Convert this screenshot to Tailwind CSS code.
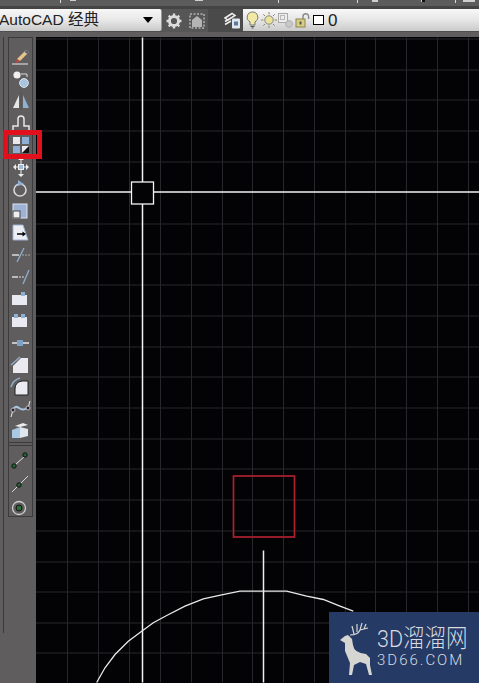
<!DOCTYPE html>
<html lang="en">
<head>
    <meta charset="UTF-8">
    <title>AutoCAD</title>
    <script src="https://cdn.jsdelivr.net/npm/@tailwindcss/browser@4"></script>
</head>
<body class="bg-[#5f5d5e] font-['Liberation_Sans','Noto_Sans_CJK_SC',sans-serif]">
<div class="relative w-[479px] h-[683px] overflow-hidden flex flex-col">

    <!-- title strip -->
    <svg class="block h-[9px] w-full shrink-0 bg-[#5c5c5c]" viewBox="0 0 479 9">
        <path d="M60.5 0V3M278.5 0V3M357.5 0V3M455.5 0V3" stroke="#d8d8d8"/>
        <path d="M70 0h6v1h-6zM372 0h6v2h-6zM421 0h4v2h-4zM463 0h12v2h-12zM195 0h8v1h-8z" fill="#cfcfcf"/>
        <path d="M422 0h3v2h-3z" fill="#111"/>
        <path d="M0 7.5H479" stroke="#444" stroke-width="3"/>
    </svg>

    <!-- workspace / layer toolbar -->
    <div class="h-[23px] shrink-0 flex items-stretch bg-[#4f4f4f]">
        <div class="w-[162px] h-[22px] pr-[8px] flex items-center justify-between rounded-r-[2px] bg-gradient-to-b from-[#f7f7f7] via-[#e8e8e8] to-[#c9c9c9] border-r border-[#999]">
            <span class="text-[15.5px] leading-none text-[#222] whitespace-nowrap -ml-[1px]">AutoCAD 经典</span>
            <span class="w-0 h-0 border-x-[5px] border-x-transparent border-t-[6px] border-t-black"></span>
        </div>
        <div class="w-[46px] flex items-center gap-[7px] pl-[4px] bg-[#565656]">
            <!-- gear -->
            <svg class="w-[16px] h-[16px]" viewBox="0 0 16 16">
                <circle cx="8" cy="8" r="4.6" fill="none" stroke="#dcdcdc" stroke-width="3"/>
                <path d="M8 0.5V3M8 13V15.5M0.5 8H3M13 8H15.5M2.7 2.7L4.5 4.5M11.5 11.5L13.3 13.3M13.3 2.7L11.5 4.5M4.5 11.5L2.7 13.3" stroke="#dcdcdc" stroke-width="2.4"/>
            </svg>
            <!-- workspace -->
            <svg class="w-[16px] h-[16px]" viewBox="0 0 16 16">
                <rect x="1" y="1" width="14" height="14" fill="none" stroke="#e0e0e0" stroke-dasharray="2 1.5"/>
                <path d="M3 14V7L8 3L13 7V14Z" fill="#b4b4b4"/>
            </svg>
        </div>
        <div class="w-[35px] flex items-center pl-[16px] bg-[#4a4a4a]">
            <!-- layer properties -->
            <svg class="w-[17px] h-[17px] shrink-0" viewBox="0 0 17 17">
                <path d="M1 6L8 1.5L11 3.5L4 8ZM1 9.5L7 6M1 12.5L7 9" fill="none" stroke="#eee" stroke-width="1.5"/>
                <rect x="8" y="6.5" width="8" height="10" rx="1" fill="#dfe6ee"/>
                <rect x="10" y="9.5" width="4" height="4" fill="#5b7a9a"/>
            </svg>
        </div>
        <div class="flex-1 h-[22px] flex items-center pl-[3px] gap-[1px] bg-gradient-to-b from-[#f8f8f8] via-[#e6e6e6] to-[#cbcbcb]">
            <!-- bulb -->
            <svg class="w-[13px] h-[18px]" viewBox="0 0 13 18">
                <path d="M6.5 1A5.2 5.2 0 0 0 4 10.8V14H9V10.8A5.2 5.2 0 0 0 6.5 1Z" fill="#f2e9a6" stroke="#777"/>
                <path d="M4.5 15.5H8.5M5.5 17H7.5" stroke="#555"/>
            </svg>
            <!-- sun -->
            <svg class="w-[16px] h-[16px] ml-[1px]" viewBox="0 0 16 16">
                <circle cx="8" cy="8" r="4.2" fill="#ece49a" stroke="#888"/>
                <path d="M8 0V2.4M8 13.6V16M0 8H2.4M13.6 8H16M2.3 2.3L4 4M12 12L13.7 13.7M13.7 2.3L12 4M4 12L2.3 13.7" stroke="#8b8b5b"/>
            </svg>
            <!-- viewport freeze -->
            <svg class="w-[15px] h-[15px]" viewBox="0 0 15 15">
                <rect x="0.5" y="0.5" width="9" height="9" fill="#eee" stroke="#a9a9a9"/>
                <rect x="2.5" y="2.5" width="4" height="4" fill="none" stroke="#b9b9b9"/>
                <circle cx="11" cy="11" r="3.4" fill="#c9c9c9" stroke="#b0b0b0"/>
            </svg>
            <!-- lock -->
            <svg class="w-[15px] h-[15px] ml-[1px]" viewBox="0 0 15 15">
                <path d="M8 6V3.5A2.8 2.8 0 0 1 13.6 3.5V6" fill="none" stroke="#888" stroke-width="1.4"/>
                <rect x="1" y="6" width="9" height="8" fill="#d8cf85" stroke="#8a8450"/>
                <rect x="4.5" y="8.5" width="2" height="3" fill="#555"/>
            </svg>
            <span class="w-[11px] h-[10px] ml-[2px] bg-white border border-black"></span>
            <span class="text-[17px] leading-none text-[#222] ml-[3px]">0</span>
        </div>
    </div>

    <div class="flex-1 flex pt-[5px] min-h-0">
        <!-- docked toolbars -->
        <div class="w-[36px] shrink-0 flex items-start relative">
            <div class="w-[4px] h-[596px] mr-[4px] border-r border-[#3a3a3a]"></div>
            <div class="w-[25px] h-[480px] border border-[#3b3b3b] pt-[8px] flex flex-col items-center">
                <!-- erase -->
                <svg class="w-[24px] h-[22px] shrink-0" viewBox="0 0 24 22"><path d="M17 4L20 6L11 15L8 13Z" fill="#e6c58c"/><path d="M17 4L20 6L18.5 8L15.5 6Z" fill="#4d6078"/><path d="M8 13L11 15L7 17Z" fill="#d0413a"/><path d="M3 18H19" stroke="#eee"/></svg>
                <!-- copy -->
                <svg class="w-[24px] h-[22px] shrink-0" viewBox="0 0 24 22"><circle cx="8" cy="7" r="3.6" fill="#f0f0f0"/><circle cx="15" cy="15" r="4.4" fill="#a9c4de" stroke="#dbe6f0"/><path d="M12 6H18V9" fill="none" stroke="#ddd"/></svg>
                <!-- mirror -->
                <svg class="w-[24px] h-[22px] shrink-0" viewBox="0 0 24 22"><path d="M10 5L4 18H10Z" fill="#e6e6e6"/><path d="M14 5V18H20Z" fill="#8fb2d2"/><path d="M12 2V20" stroke="#555"/></svg>
                <!-- offset -->
                <svg class="w-[24px] h-[22px] shrink-0" viewBox="0 0 24 22"><path d="M4 18V14H9V7A3 3 0 0 1 15 7V14H20V18" fill="none" stroke="#e8e8e8" stroke-width="1.5"/><path d="M4 20H20" stroke="#a9c4de" stroke-width="1.5"/></svg>
                <!-- array -->
                <svg class="w-[24px] h-[22px] shrink-0" viewBox="0 0 24 22"><rect x="4" y="3" width="7" height="7" fill="#e8e8ee"/><rect x="13" y="3" width="7" height="7" fill="#8fb0d4"/><rect x="4" y="12" width="7" height="7" fill="#8fb0d4"/><rect x="13" y="12" width="7" height="7" fill="#e8e8ee"/><path d="M13 19L20 12V19Z" fill="#111"/></svg>
                <!-- move -->
                <svg class="w-[24px] h-[22px] shrink-0" viewBox="0 0 24 22"><rect x="9.500" y="8.500" width="5" height="5" fill="#9dbbd8" stroke="#eee"/><path d="M12 1L15 4H9ZM12 21L9 18H15ZM4 11L7 8V14ZM20 11L17 14V8Z" fill="#eee"/><path d="M12 4V8M12 14V18M7 11H9M15 11H17" stroke="#eee"/></svg>
                <!-- rotate -->
                <svg class="w-[24px] h-[22px] shrink-0" viewBox="0 0 24 22"><circle cx="11" cy="12" r="6" fill="none" stroke="#d8d8d8" stroke-width="1.6"/><path d="M9 2L15 6L9 8Z" fill="#8fb0d4"/></svg>
                <!-- scale -->
                <svg class="w-[24px] h-[22px] shrink-0" viewBox="0 0 24 22"><rect x="4" y="4" width="14" height="14" fill="#9db2d4" stroke="#dfe5f0"/><rect x="4" y="11" width="7" height="7" fill="#eee" stroke="#444"/></svg>
                <!-- stretch -->
                <svg class="w-[24px] h-[22px] shrink-0" viewBox="0 0 24 22"><path d="M4 3H14L19 18H4Z" fill="#eceef4" stroke="#9db2d4"/><path d="M8 12H15" stroke="#000" stroke-width="1.5"/><path d="M17 12L13.500 9.500V14.500Z" fill="#000"/></svg>
                <!-- trim -->
                <svg class="w-[24px] h-[22px] shrink-0" viewBox="0 0 24 22"><path d="M3 11H10" stroke="#eee" stroke-width="1.3"/><path d="M13 11H21" stroke="#aaa" stroke-dasharray="2 1"/><path d="M8 18L15 4" stroke="#8fb0d4" stroke-width="1.3"/></svg>
                <!-- extend -->
                <svg class="w-[24px] h-[22px] shrink-0" viewBox="0 0 24 22"><path d="M3 11H9" stroke="#eee" stroke-width="1.3"/><path d="M10 11H15" stroke="#ddd" stroke-dasharray="2 1"/><path d="M14 18L20 4" stroke="#8fb0d4" stroke-width="1.3"/></svg>
                <!-- break at point -->
                <svg class="w-[24px] h-[22px] shrink-0" viewBox="0 0 24 22"><rect x="3" y="7" width="15" height="10" fill="#e9e9f1"/><rect x="12" y="4" width="4" height="4" fill="#8fb0d4"/></svg>
                <!-- break -->
                <svg class="w-[24px] h-[22px] shrink-0" viewBox="0 0 24 22"><rect x="3" y="7" width="15" height="10" fill="#e9e9f1"/><rect x="5" y="4" width="4" height="4" fill="#8fb0d4"/><rect x="12" y="4" width="4" height="4" fill="#8fb0d4"/></svg>
                <!-- join -->
                <svg class="w-[24px] h-[22px] shrink-0" viewBox="0 0 24 22"><path d="M3 11H20" stroke="#e8e8e8" stroke-width="1.5"/><rect x="8" y="8" width="6" height="6" fill="#7fa3c8"/></svg>
                <!-- chamfer -->
                <svg class="w-[24px] h-[22px] shrink-0" viewBox="0 0 24 22"><path d="M12 4H19V19H4V12Z" fill="#eaeaf0"/><path d="M2 11L11 3" stroke="#8fa8c4" stroke-width="1.6"/></svg>
                <!-- fillet -->
                <svg class="w-[24px] h-[22px] shrink-0" viewBox="0 0 24 22"><path d="M6 19V13Q6 6 13 5H19V19Z" fill="#eaeaf0" stroke="#222"/><path d="M2 11Q4 4 11 2" fill="none" stroke="#8fa8c4" stroke-width="1.6"/></svg>
                <!-- blend -->
                <svg class="w-[24px] h-[22px] shrink-0" viewBox="0 0 24 22"><path d="M2 19L4 12M19 10L21 3" stroke="#eee"/><path d="M4 12Q6 7 10 10T18 10" fill="none" stroke="#a9c4de" stroke-width="2"/><circle cx="4" cy="12" r="2" fill="#223" stroke="#bbb"/><circle cx="19" cy="10" r="2" fill="#223" stroke="#bbb"/></svg>
                <!-- explode -->
                <svg class="w-[24px] h-[22px] shrink-0" viewBox="0 0 24 22"><path d="M3 10L11 7V18H3Z" fill="#a9c8e4"/><path d="M11 7L19 9V16L11 18Z" fill="#e0e6ee"/><path d="M6 6L14 3L19 5L11 7Z" fill="#eee"/></svg>

                <div class="w-full h-[4px] border-y border-[#3b3b3b] shrink-0"></div>

                <!-- geometric constraints -->
                <svg class="w-[24px] h-[22px] shrink-0 mt-[3px]" viewBox="0 0 24 22"><path d="M6 16L17 6" stroke="#e8e8e8"/><circle cx="5" cy="17" r="2.200" fill="#263" stroke="#111"/><circle cx="16" cy="6" r="2.200" fill="#263" stroke="#111"/></svg>
                <svg class="w-[24px] h-[22px] shrink-0 mt-[2px]" viewBox="0 0 24 22"><path d="M3 19L19 3" stroke="#d8d8d8"/><circle cx="10" cy="12" r="2.200" fill="#263" stroke="#111"/></svg>
                <svg class="w-[24px] h-[22px] shrink-0 mt-[2px]" viewBox="0 0 24 22"><circle cx="10" cy="11" r="6.500" fill="none" stroke="#cfcfcf" stroke-width="1.300"/><circle cx="10" cy="11" r="3" fill="#2b6b3a" stroke="#111"/></svg>
            </div>
        </div>

        <!-- drawing area -->
        <svg class="block flex-1 bg-[#030204]" viewBox="36 38 443 645">
            <g stroke="#28262a" stroke-width="1">
                <path d="M67.500 38V683M98.500 38V683M129.500 38V683M160.500 38V683M191.500 38V683M222.500 38V683M252.500 38V683M283.500 38V683M314.500 38V683M345.500 38V683M375.500 38V683M406.500 38V683M437.500 38V683M468.500 38V683"/>
                <path d="M36 39.500H479M36 70.500H479M36 100.500H479M36 131.500H479M36 162.500H479M36 224.500H479M36 254.500H479M36 285.500H479M36 316.500H479M36 347.500H479M36 377.500H479M36 408.500H479M36 439.500H479M36 469.500H479M36 500.500H479M36 531.500H479M36 562.500H479M36 592.500H479M36 623.500H479M36 653.500H479"/>
            </g>
            <path d="M142.500 38V683M36 192.500H479" stroke="#f4f4f4" stroke-width="1.500"/>
            <rect x="131.500" y="182.500" width="22" height="22" fill="#030204" stroke="#f4f4f4" stroke-width="1.300"/>
            <rect x="233.500" y="476.500" width="61" height="61" fill="none" stroke="#b0202f" stroke-width="1.700"/>
            <path d="M263.500 551V683" stroke="#eee" stroke-width="1.500"/>
            <polyline points="96.700,683 105,668.300 115,655 128.300,641.700 141.700,631.700 153.300,623.300 166.700,616 185,606.700 203.300,599.300 221.700,595.300 240,591.700 286.700,591.700 306.700,596.700 323.300,600 340,606.700 353.300,611.700" fill="none" stroke="#e8e8e8" stroke-width="1.300"/>
        </svg>
    </div>

    <!-- highlight on the array tool -->
    <div class="absolute left-[3px] top-[130px] w-[39px] h-[29px] border-[5px] border-[#e1101c]"></div>

    <!-- watermark -->
    <div class="absolute right-0 bottom-0 w-[150px] h-[71px] bg-[#253a64] flex items-center pl-[9px]">
        <svg class="w-[36px] h-[56px] shrink-0 mt-[2px]" viewBox="0 0 36 56">
            <path d="M10 14L14 18L15 24Q16 32 28 33L32 37V44L34 54H31L28 43L22 41L16 44L14 54H11L12 42L7 30V22L2 19L7 15Z" fill="#d5d5d2"/>
            <path d="M12 14Q20 14 22 9L30 7M16 13L14 5M19 11L19 3M22 9L24 2M26 8L28 3" fill="none" stroke="#d5d5d2" stroke-width="1.200"/>
        </svg>
        <div class="ml-[3px] flex flex-col text-[#d9dbe0] font-['Roboto','Noto_Sans_CJK_SC',sans-serif] font-light">
            <span class="text-[21.5px] leading-[26px] whitespace-nowrap scale-y-[1.15] origin-left">3D溜溜网</span>
            <span class="text-[15px] leading-[17px] whitespace-nowrap tracking-[2px]">3D66.COM</span>
        </div>
    </div>
</div>
</body>
</html>
